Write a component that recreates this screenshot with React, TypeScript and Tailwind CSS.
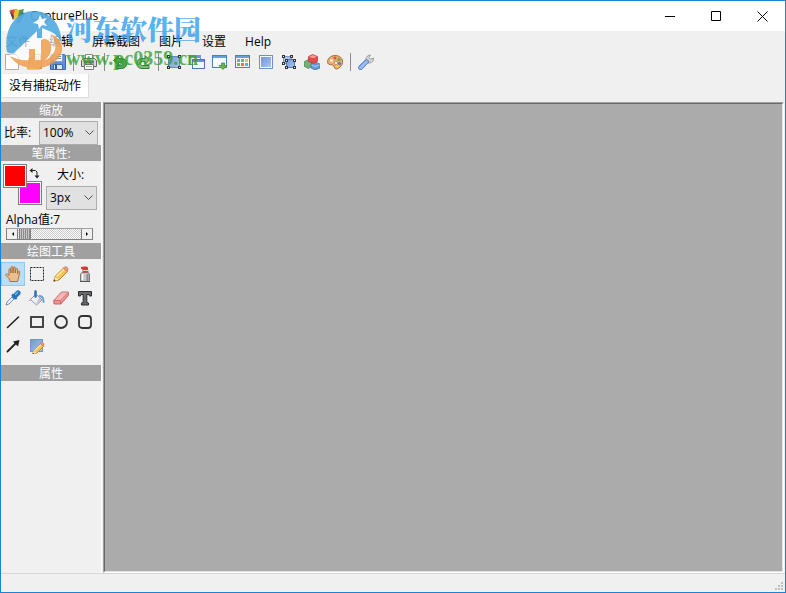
import { useState, type ReactNode } from "react";

const MENUS = ["文件", "编辑", "屏幕截图", "图片", "设置", "Help"];

function Icon({ children }: { children: ReactNode }) {
  return (
    <svg viewBox="0 0 16 16" width="16" height="16" fill="none" aria-hidden="true">
      {children}
    </svg>
  );
}

// 四角的小方块
function Handles({ points }: { points: number[][] }) {
  return (
    <>
      {points.map(([x, y]) => (
        <rect key={`${x}-${y}`} x={x} y={y} width="2" height="2" fill="#e8e8e8" stroke="#333" />
      ))}
    </>
  );
}

const toolbar: { name: string; icon: ReactNode }[][] = [
  [
    {
      name: "新建",
      icon: <path d="M1.5.5h10l3 3v12h-13z" fill="#fff" stroke="#b5aaa5" />,
    },
    {
      name: "打开",
      icon: (
        <>
          <path d="M1.500 4.500h4l1-2h8v12h-13z" fill="#f3a84a" stroke="#d18a35" />
          <path d="M6.500.500h7v9h-7z" fill="#fbf6ee" stroke="#c2a887" />
          <path d="M8 3h4M8 5h4" stroke="#b9a58b" />
          <path d="M.5 15l2-6h12l-2 6z" fill="#ffc766" stroke="#e09736" />
        </>
      ),
    },
    {
      name: "保存",
      icon: (
        <>
          <path d="M.5 1.5l1-1h13l1 1v14H.5z" fill="#5c8fdc" stroke="#3a66b0" />
          <path d="M3.500 .500h9v7h-9z" fill="#f5f9ff" stroke="#7ea4dc" />
          <path d="M5 2.500h6M5 4.500h6" stroke="#6e91c5" />
          <path d="M3.500 10.500h9v5h-9z" fill="#dce8f8" stroke="#46699f" />
          <path d="M5 11h2v4H5z" fill="#35578f" />
        </>
      ),
    },
  ],
  [
    {
      name: "打印",
      icon: (
        <>
          <path d="M4.500.500h7v6h-7z" fill="#fff" stroke="#888" />
          <path d="M.5 6.500l2-2h11l2 2v6H.5z" fill="#d6d6d9" stroke="#666" />
          <path d="M3 6.500h10v3H3z" fill="#777b82" />
          <path d="M3.500 10.500h9v5h-9z" fill="#fff" stroke="#777" />
          <path d="M5 12.500h6" stroke="#aaa" />
        </>
      ),
    },
  ],
  [
    {
      name: "撤销",
      icon: (
        <path
          d="M1.500 6.500l5-5v3h3c7 0 7 10 0 10h-5v-3h4c3 0 3-3 0-3h-2v3z"
          fill="#49a94c"
          stroke="#2d7d38"
        />
      ),
    },
    {
      name: "重做",
      icon: (
        <path
          d="M14.500 6l-4.500-4.500v3H7c-7 0-7 10 0 10h7v-3H7.500c-3 0-3-4 0-4H10v3z"
          fill="#83bd79"
          stroke="#2d7d38"
        />
      ),
    },
  ],
  [
    {
      name: "区域捕捉",
      icon: (
        <>
          <rect x="2.500" y="2.500" width="11" height="11" fill="url(#blue)" stroke="#6385bd" />
          <Handles points={[[1.500, 1.500], [12.500, 1.500], [1.500, 12.500], [12.500, 12.500]]} />
        </>
      ),
    },
    {
      name: "窗口捕捉",
      icon: (
        <>
          <rect x=".5" y="1.5" width="11" height="9" fill="#fff" stroke="#6d98d6" />
          <path d="M1 3h10" stroke="#6d98d6" strokeWidth="2" />
          <rect x="3.500" y="5.500" width="12" height="9" fill="#f4f8fe" stroke="#4f76b3" />
          <path d="M4 7h11" stroke="#6690d0" strokeWidth="2" />
        </>
      ),
    },
    {
      name: "滚动捕捉",
      icon: (
        <>
          <rect x=".5" y="1.5" width="14" height="12" fill="#f7faff" stroke="#557cb8" />
          <path d="M1 3h13" stroke="#6d9cda" strokeWidth="2" />
          <path d="M9.500 9h3v2.500h2.500l-4 4-4-4h2.500z" fill="#65b653" stroke="#3e8c37" strokeWidth=".8" />
        </>
      ),
    },
    {
      name: "菜单捕捉",
      icon: (
        <>
          <rect x=".5" y="1.5" width="14" height="12" fill="#fffdf5" stroke="#557cb8" />
          <path d="M1 3h13" stroke="#6d9cda" strokeWidth="2" />
          <path d="M2 5h3v3H2zM10 9h3v3h-3z" fill="#62a8e8" />
          <path d="M6 5h3v3H6zM2 9h3v3H2z" fill="#72b65d" />
          <path d="M10 5h3v3h-3z" fill="#f0bd54" />
          <path d="M6 9h3v3H6z" fill="#ed7044" />
        </>
      ),
    },
    {
      name: "全屏捕捉",
      icon: (
        <>
          <rect x="1.500" y="1.500" width="13" height="13" fill="#f5f9ff" stroke="#6d90c7" />
          <rect x="3" y="3" width="10" height="10" fill="url(#blue)" />
        </>
      ),
    },
    {
      name: "多区域捕捉",
      icon: (
        <>
          <path d="M2.500 2.500h8v7h-8z" fill="#a9c4ef" stroke="#7b99c8" />
          <path d="M5.500 5.500h8v8h-8z" fill="url(#blue)" stroke="#5577b0" />
          <Handles points={[[1.500, 1.500], [9.500, 1.500], [1.500, 8.500], [4.500, 5.500], [12.500, 5.500], [4.500, 12.500], [12.500, 12.500]]} />
        </>
      ),
    },
    {
      name: "对象",
      icon: (
        <>
          <path d="M.5 7.500l4-2 3 2v5l-3 2-4-2z" fill="#72b478" stroke="#43804e" strokeWidth=".7" />
          <path d="M7 10l4-2 5 2v4l-5 2-4-2z" fill="#659bd4" stroke="#39699e" strokeWidth=".7" />
          <path d="M7.500 11l3.500 1.500L15.500 11" stroke="#a9ccef" />
          <path d="M4.500 2.500l4-2 5 2v5l-4 2-5-2z" fill="#e8474c" stroke="#b6363b" strokeWidth=".7" />
          <path d="M5 2.700l4 1.500 4-1.500-4.500-1.700z" fill="#ff9a93" />
        </>
      ),
    },
    {
      name: "调色板",
      icon: (
        <>
          <path
            d="M8 1.500c5 0 8 3 7.500 7-.3 3-3 6-6 6.500-2 .2-2-2-3-3.500-1-1.300-5 0-5.800-2.500C-.3 5 3.500 1.500 8 1.500z"
            fill="#e6ae72"
            stroke="#a86c38"
          />
          <circle cx="4.500" cy="6.500" r="1.500" fill="#f7f2da" />
          <circle cx="8" cy="4" r="1.500" fill="#e55345" />
          <circle cx="12" cy="5.500" r="1.500" fill="#60ab4e" />
          <circle cx="12.500" cy="9.500" r="1.500" fill="#3f7fc7" />
          <circle cx="9" cy="9" r="1.600" fill="#fff" stroke="#b0743e" strokeWidth=".7" />
          <circle cx="10.500" cy="12.500" r="1.300" fill="#f4d54a" />
        </>
      ),
    },
  ],
  [
    {
      name: "选项",
      icon: (
        <>
          <path
            d="M8 7.500c-1-3 1-6.500 4.500-6.500L11 3.500l1.500 1.800L15.500 4c.3 3.500-2.500 5.500-5.500 5z"
            fill="#d7d7d7"
            stroke="#8d8d8d"
            strokeWidth=".8"
          />
          <path d="M2.500 13.700l6-6" stroke="#5079c2" strokeWidth="4.600" strokeLinecap="round" />
          <path d="M2.500 13.700l6-6" stroke="#9dbdf2" strokeWidth="3" strokeLinecap="round" />
        </>
      ),
    },
  ],
];

const tools: { name: string; icon: ReactNode }[] = [
  {
    name: "移动",
    icon: (
      <path
        d="M5 15.500L4.500 13 1 9.500c-.8-1.200.6-2 1.500-1.200L4 9.500V3.500c0-1.200 1.500-1.200 1.700 0L6 7V1.700C6 .2 8 .2 8 1.700V7l.3-5.200c.1-1.400 1.900-1.400 1.900 0V7l.6-3.700c.2-1.200 1.900-1 1.800.2L12.500 8l.7-2.300c.4-1 1.800-.6 1.500.6L13.500 12l-1 3.500z"
        fill="#ecc08c"
        stroke="#9b6a3c"
        strokeWidth=".9"
      />
    ),
  },
  {
    name: "选择",
    icon: <rect x="1.500" y="1.500" width="13" height="13" stroke="#222" strokeDasharray="2 1" />,
  },
  { name: "铅笔", icon: <Pencil /> },
  {
    name: "喷枪",
    icon: (
      <>
        <path d="M3.500 15.500V9c0-1.500 1-2.500 2-2.500h5c1 0 2 1 2 2.500v6.500z" fill="#c6c6ca" stroke="#77777d" />
        <path d="M5.500 8v6" stroke="#fff" strokeWidth="1.500" />
        <path d="M10.500 8v7" stroke="#8c8c93" strokeWidth="2" />
        <path d="M5 3.200L4 2.500V1l3-.5h2.500L11 1.500V3l.5 3.500h-6V3.500z" fill="#e33434" />
        <path d="M6 4.500h5" stroke="#f6d5d5" />
        <path d="M3 15.500h10" stroke="#555" />
      </>
    ),
  },
  {
    name: "取色",
    icon: (
      <>
        <path d="M1 15l1-3 6-6 2 2-6 6z" fill="#e6f2fb" stroke="#58799a" strokeWidth=".8" />
        <path d="M7 4.500L11.500 9" stroke="#235b99" strokeWidth="2" />
        <path d="M9.500 6.500l3.500-3.500" stroke="#2674bd" strokeWidth="5" strokeLinecap="round" />
        <path d="M10.500 4.500l2-2" stroke="#72b5ed" strokeWidth="1.500" strokeLinecap="round" />
      </>
    ),
  },
  {
    name: "填充",
    icon: (
      <>
        <path d="M1.500 9.500L7 4l6 6-5.500 5z" fill="#f0f0f6" stroke="#9898a9" />
        <path d="M7 14.500l5.500-4.500-2.500-2.500z" fill="#c6c6d2" />
        <path d="M9.500 5c4-.5 6 2 6 7-.5 2-2 1-2-1 0-2.500-1-3.500-3-4z" fill="#6f9fd2" />
        <path d="M6.500 1.500v5" stroke="#2e70bd" strokeWidth="2.500" strokeLinecap="round" />
        <path d="M2 8.500L.5 11" stroke="#b48ad0" />
      </>
    ),
  },
  {
    name: "橡皮",
    icon: (
      <>
        <path d="M.7 10.500L8.500 2h6.800v3.500L8 14H1z" fill="#ef9293" stroke="#bc5d60" strokeWidth=".9" />
        <path d="M1 10.500L8.700 2.500H15L7.500 10.500z" fill="#f8b5b3" />
        <path d="M1 10.500h6.500V14" stroke="#d06d70" />
        <path d="M7.500 10.500L15 2.500" stroke="#d77b7c" />
      </>
    ),
  },
  {
    name: "文字",
    icon: (
      <path
        d="M1.500 1.500h13v4.500h-2l-.5-1.500H9.800v8l1.700.5v2h-7v-2l1.700-.5v-8H4L3.500 6h-2z"
        fill="#66686c"
        stroke="#292b2f"
      />
    ),
  },
  { name: "直线", icon: <path d="M2.500 13.500l11-10.500" stroke="#222" strokeWidth="1.600" strokeLinecap="round" /> },
  { name: "矩形", icon: <rect x="2" y="3" width="12" height="10" stroke="#333" strokeWidth="1.800" /> },
  { name: "椭圆", icon: <circle cx="8" cy="8" r="6" stroke="#333" strokeWidth="1.800" /> },
  {
    name: "圆角矩形",
    icon: <rect x="2" y="2" width="12" height="12" rx="3" stroke="#333" strokeWidth="1.800" />,
  },
  {
    name: "箭头",
    icon: (
      <>
        <path d="M2.500 13.500l8-8" stroke="#222" strokeWidth="1.800" strokeLinecap="round" />
        <path d="M8 3.500L14.500 2 13 8.500z" fill="#222" />
      </>
    ),
  },
  {
    name: "备注",
    icon: (
      <>
        <rect x="1.500" y="1.500" width="12" height="12" fill="url(#blue)" stroke="#6f96d4" />
        <g transform="translate(3 4) scale(.8)">
          <Pencil />
        </g>
      </>
    ),
  },
];

function Pencil() {
  return (
    <>
      <path d="M.8 15.200l1.500-5L10.500 2l4 3.500L6 14z" fill="#f7c455" stroke="#b6781c" strokeWidth=".9" />
      <path d="M3.500 10.500L11 3.200" stroke="#ffe9a3" strokeWidth="1.500" />
      <path d="M10.500 2L12 .8c1.500-.6 3.600 1.300 3 3l-1 1.500z" fill="#ee9c80" stroke="#b9684f" strokeWidth=".6" />
      <path d="M.8 15.200l1.400-4.500 3.300 3z" fill="#fae4bd" />
      <path d="M.5 15.500l.7-2.200 1.500 1.400z" fill="#333" />
    </>
  );
}

function SectionTitle({ children }: { children: ReactNode }) {
  return <h2 className="h-4 bg-[#a0a0a0] text-center leading-[17px] text-white">{children}</h2>;
}

function Select({ id, options, className }: { id: string; options: string[]; className: string }) {
  return (
    <div className={`relative ${className}`}>
      <select
        id={id}
        className="h-full w-full appearance-none border border-[#adadad] bg-[#e1e1e1] pl-[3px] outline-none"
      >
        {options.map((option) => (
          <option key={option}>{option}</option>
        ))}
      </select>
      <svg
        viewBox="0 0 9 6"
        width="9"
        height="6"
        className="pointer-events-none absolute top-1/2 right-1 -translate-y-1/2"
      >
        <path d="M.5.5l4 4 4-4" fill="none" stroke="#505050" />
      </svg>
    </div>
  );
}

function Watermark() {
  return (
    <div className="pointer-events-none absolute top-[9px] left-1 flex gap-[3px]" aria-hidden="true">
      <svg viewBox="0 0 58 60" width="58" height="60">
        <circle cx="29" cy="30" r="28" fill="#fff" opacity=".65" />
        <g opacity=".82">
          {/* 上半蓝色，下半橙色 */}
          <path
            d="M2 42C-2 18 12 1 29 1c14 0 27 10 28 33-3-7-7-11-13-13l-7-3v10h-5v-7L10 42c-1 2-4 2-8 0z"
            fill="#3fa0dc"
          />
          <path
            d="M5 46c6 3 13 5 19 4V39h6v11h6V30c10-5 15 12 4 20 12-4 14-19 5-26 9 3 13 9 12 17-3 11-15 18-28 17C17 58 9 53 5 46z"
            fill="#ee9a48"
          />
          <path d="M35 5l2 4 5-1-3 4 3 4-5-1-3 4-1-5-5-1 5-3z" fill="#fff" />
        </g>
      </svg>
      <div className="font-bold whitespace-nowrap">
        <p className="font-['Noto_Serif_CJK_SC','Noto_Sans_CJK_SC',serif] text-[27px] leading-[38px] font-black text-[#2e9df0]/80">
          河东软件园
        </p>
        <p className="font-['Liberation_Serif',serif] text-xl leading-5 text-[#35a02d]/80">www.pc0359.cn</p>
      </div>
    </div>
  );
}

export default function App() {
  const [tool, setTool] = useState("移动");
  const [alpha, setAlpha] = useState(7);
  const [colors, setColors] = useState(["#ff0000", "#ff00ff"]);

  return (
    <div className="relative flex min-h-screen flex-col border border-[#1883d7] bg-[#f0f0f0] font-['Open_Sans','Noto_Sans_CJK_SC',sans-serif] text-xs text-black">
      <svg width="0" height="0" className="absolute">
        <defs>
          <linearGradient id="blue" x1="0" y1="0" x2="1" y2="1">
            <stop offset="0" stopColor="#7297d5" />
            <stop offset="1" stopColor="#a9c5f1" />
          </linearGradient>
        </defs>
      </svg>

      {/* 标题栏 */}
      <header className="flex h-[30px] items-center bg-white pl-2">
        <Icon>
          <path d="M1 2l7-1 1 6-5 5z" fill="#db4a32" />
          <path d="M6 1l4 1-2 11-4-3z" fill="#efc62f" />
          <path d="M10 2l5-1-3 10-4 2z" fill="#4c9d49" />
          <path d="M0 2l5 6-1 4z" fill="#444" />
          <path d="M13 4l3 1-5 10H7z" fill="#526b9e" />
        </Icon>
        <h1 className="ml-[5px] flex-1">CapturePlus</h1>
        <button aria-label="最小化" className="flex h-full w-[46px] items-center justify-center">
          <svg viewBox="0 0 11 11" width="11" height="11">
            <path d="M0 5.5h10" stroke="#000" />
          </svg>
        </button>
        <button aria-label="最大化" className="flex h-full w-[46px] items-center justify-center">
          <svg viewBox="0 0 11 11" width="11" height="11">
            <path d="M.5.5h9v9h-9z" fill="none" stroke="#000" />
          </svg>
        </button>
        <button aria-label="关闭" className="flex h-full w-[46px] items-center justify-center">
          <svg viewBox="0 0 11 11" width="11" height="11">
            <path d="M.5.5l10 10M10.500.500l-10 10" stroke="#000" />
          </svg>
        </button>
      </header>

      {/* 菜单 */}
      <nav className="flex h-5 items-end gap-[19px] pl-[5px]">
        {MENUS.map((menu) => (
          <button key={menu} className="leading-[18px]">
            {menu}
          </button>
        ))}
      </nav>

      {/* 工具栏 */}
      <div className="flex h-[22px] items-center gap-[7px] pl-[3px]">
        {toolbar.map((group, i) => (
          <div key={i} className="flex items-center gap-[7px]">
            {i > 0 && <span className="h-[18px] w-px bg-[#8c8c8c]" />}
            {group.map((item) => (
              <button key={item.name} title={item.name}>
                <Icon>{item.icon}</Icon>
              </button>
            ))}
          </div>
        ))}
      </div>

      <div className="flex h-[29px] items-start pt-px pl-px">
        <button className="h-6 border-r border-b border-[#dcdcdc] bg-white pr-[7px] pl-[7px]">没有捕捉动作</button>
      </div>

      <div className="flex flex-1">
        {/* 侧栏 */}
        <aside className="w-[100px] shrink-0">
          <SectionTitle>缩放</SectionTitle>
          <div className="flex h-[27px] items-center justify-between pt-[2px] pr-[3px] pl-[3px]">
            <label htmlFor="zoom">比率:</label>
            <Select id="zoom" options={["100%", "50%", "200%"]} className="h-6 w-[59px]" />
          </div>

          <SectionTitle>笔属性:</SectionTitle>
          <div className="flex h-[49px] justify-between pt-[3px] pr-1 pl-0.5">
            <div className="grid h-[42px] w-[39px] grid-cols-[15px_9px_15px] grid-rows-[17px_7px_17px]">
              <button
                aria-label="背景色"
                className="col-span-2 col-start-2 row-span-2 row-start-2 border border-[#808080]"
                style={{ backgroundColor: colors[1], boxShadow: "inset 0 0 0 1px #fff" }}
              />
              <button
                aria-label="前景色"
                className="col-span-2 col-start-1 row-span-2 row-start-1 border border-[#808080]"
                style={{ backgroundColor: colors[0], boxShadow: "inset 0 0 0 1px #fff" }}
              />
              <button
                aria-label="交换颜色"
                className="col-start-3 row-start-1 pl-0.5"
                onClick={() => setColors([colors[1], colors[0]])}
              >
                <svg viewBox="0 0 11 12" width="11" height="12" fill="none">
                  <path d="M2 3.500h4.500l1.500 1.500v4" stroke="#222" />
                  <path d="M3.500 1v5L.5 3.500zM5.500 8.500h5l-2.500 3z" fill="#222" />
                </svg>
              </button>
            </div>
            <div className="flex w-[51px] flex-col">
              <label htmlFor="size" className="pl-[11px] leading-[22px]">
                大小:
              </label>
              <Select id="size" options={["3px", "1px", "5px"]} className="h-6 w-[51px] shrink-0" />
            </div>
          </div>
          <div className="h-[33px] pl-[5px]">
            <label htmlFor="alpha" className="block h-[18px] leading-[20px]">
              Alpha值:{alpha}
            </label>
            <div className="flex h-3 w-[87px] border border-[#808080] border-t-[#a0a0a0] bg-white">
              <button
                aria-label="减小"
                className="flex w-[11px] items-center justify-center border-r border-[#808080] bg-[#f0f0f0]"
                onClick={() => setAlpha(Math.max(0, alpha - 1))}
              >
                <svg viewBox="0 0 3 4" width="3" height="4">
                  <path d="M3 0v4L1 2z" fill="#000" />
                </svg>
              </button>
              <input
                id="alpha"
                type="range"
                min="0"
                max="255"
                value={alpha}
                onChange={(e) => setAlpha(Number(e.target.value))}
                className="h-[10px] min-w-0 flex-1 appearance-none bg-[conic-gradient(#c8c8c8_25%,#fff_0_50%,#c8c8c8_0_75%,#fff_0)] bg-[length:2px_2px] [&::-webkit-slider-thumb]:h-[10px] [&::-webkit-slider-thumb]:w-3 [&::-webkit-slider-thumb]:appearance-none [&::-webkit-slider-thumb]:border-x [&::-webkit-slider-thumb]:border-[#808080] [&::-webkit-slider-thumb]:bg-[repeating-linear-gradient(90deg,#c4c4c4_0_1px,#8c8c8c_1px_2px)]"
              />
              <button
                aria-label="增大"
                className="flex w-[11px] items-center justify-center border-l border-[#808080] bg-[#f0f0f0]"
                onClick={() => setAlpha(Math.min(255, alpha + 1))}
              >
                <svg viewBox="0 0 3 4" width="3" height="4">
                  <path d="M0 0v4l2-2z" fill="#000" />
                </svg>
              </button>
            </div>
          </div>

          <SectionTitle>绘图工具</SectionTitle>
          <div className="grid grid-cols-[24px_24px_24px_24px] pt-[3px] pb-[7px]">
            {tools.map((t) => (
              <button
                key={t.name}
                title={t.name}
                aria-pressed={tool === t.name}
                onClick={() => setTool(t.name)}
                className={`flex h-6 w-6 items-center justify-center border ${
                  tool === t.name ? "border-[#90c8f6] bg-[#c0dcf3]" : "border-transparent"
                }`}
              >
                <Icon>{t.icon}</Icon>
              </button>
            ))}
          </div>

          <SectionTitle>属性</SectionTitle>
        </aside>

        {/* 画布 */}
        <main className="flex flex-1 border-l border-white pr-px pl-px">
          <div className="flex flex-1 border border-t-[#a0a0a0] border-r-white border-b-white border-l-[#a0a0a0]">
            <div className="flex-1 border border-t-[#696969] border-r-[#e3e3e3] border-b-[#e3e3e3] border-l-[#696969] bg-[#ababab]" />
          </div>
        </main>
      </div>

      {/* 状态栏 */}
      <footer className="flex h-[19px] items-end justify-end border-t border-[#d7d7d7] p-0.5">
        <svg viewBox="0 0 8 8" width="8" height="8" fill="#bfbfbf">
          <path d="M6 0h2v2H6zM3 3h2v2H3zM6 3h2v2H6zM0 6h2v2H0zM3 6h2v2H3zM6 6h2v2H6z" />
        </svg>
      </footer>

      <Watermark />
    </div>
  );
}
